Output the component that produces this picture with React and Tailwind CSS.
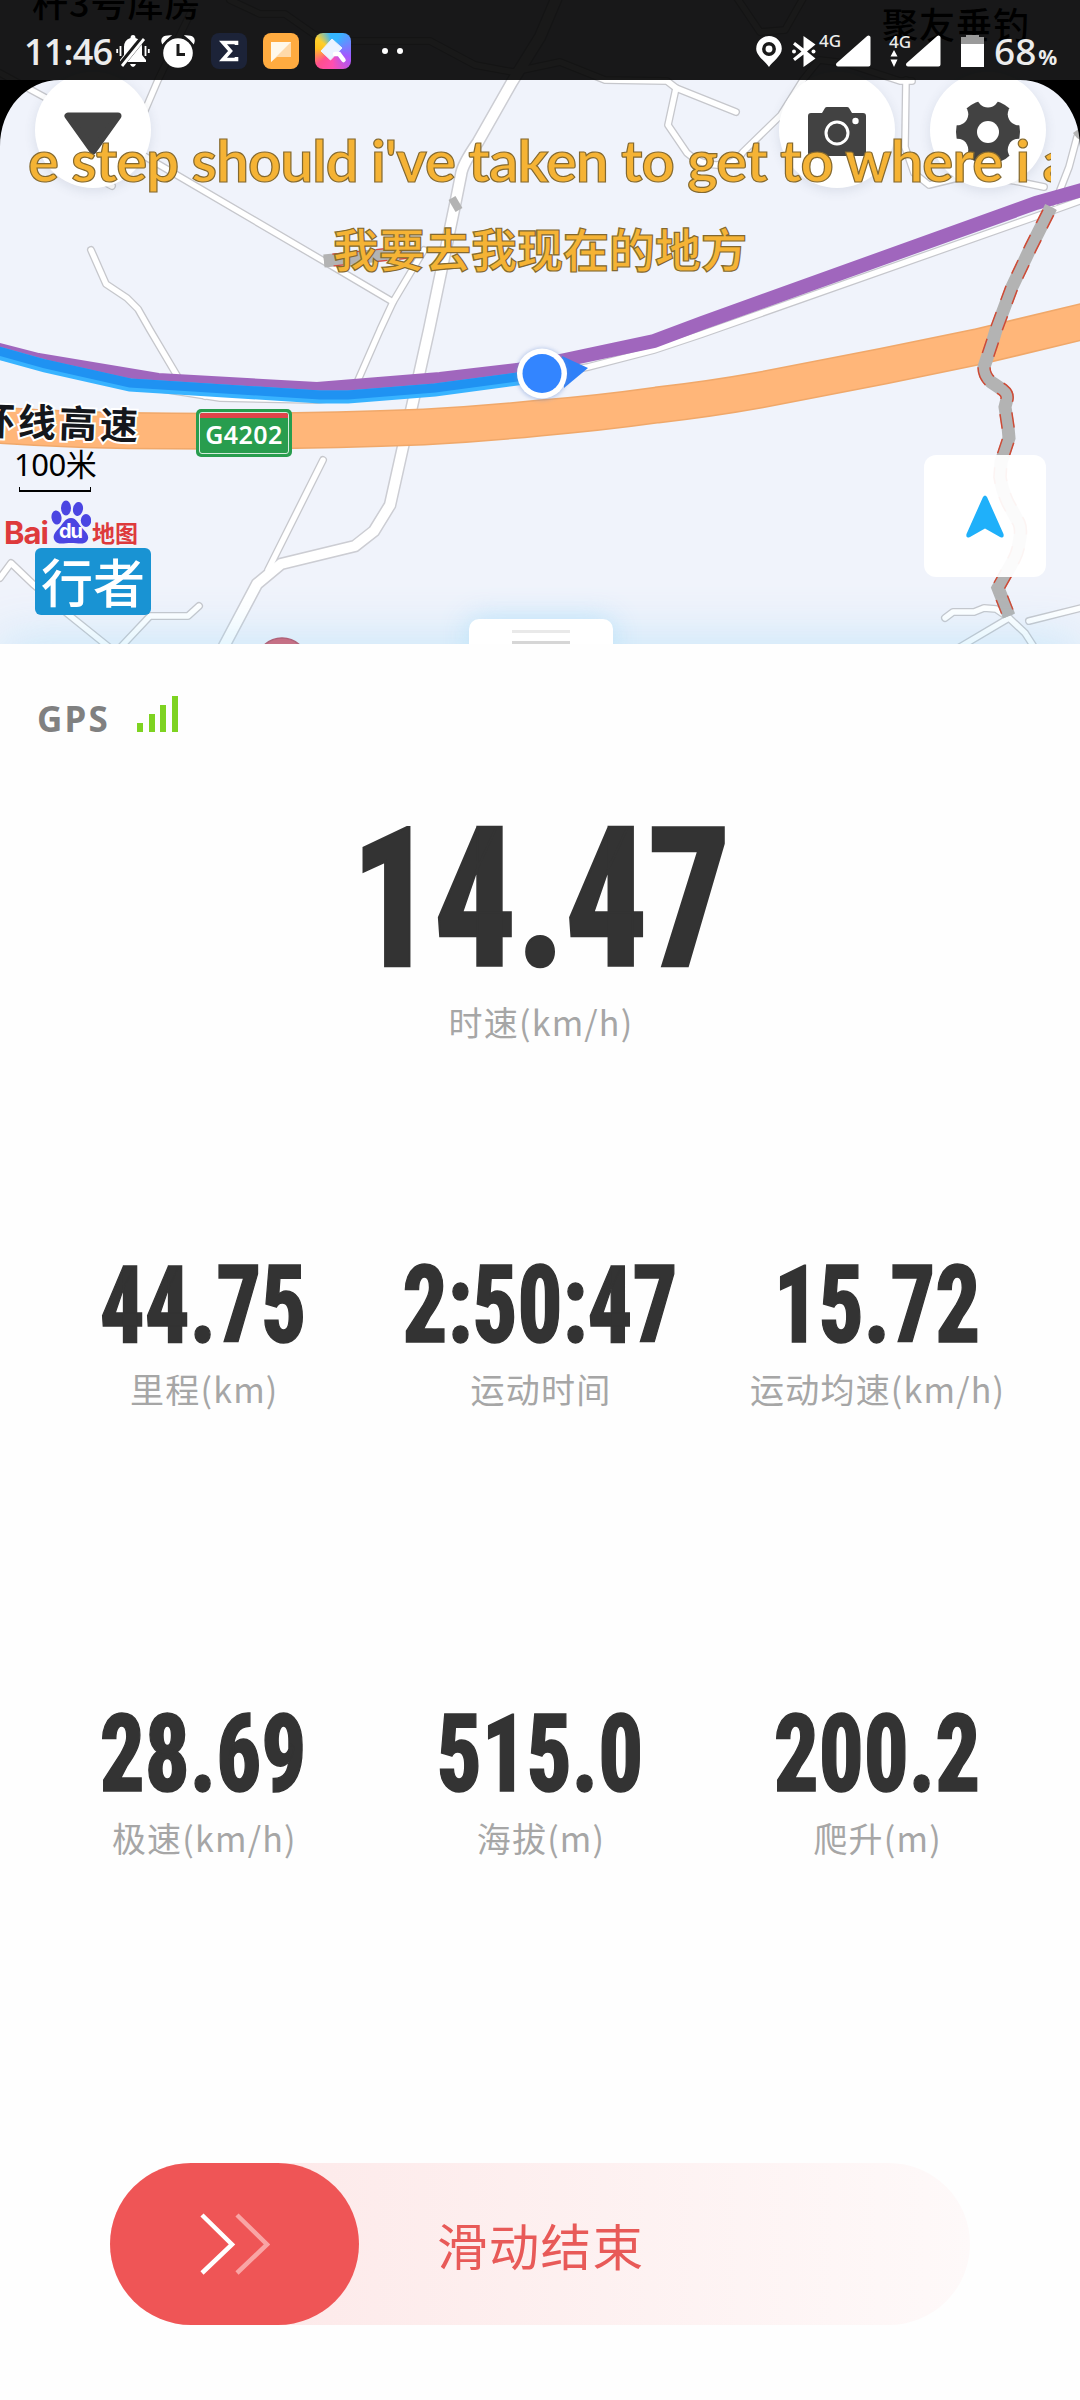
const METRICS = [
  { value: "44.75", label: "里程(km)" },
  { value: "2:50:47", label: "运动时间" },
  { value: "15.72", label: "运动均速(km/h)" },
  { value: "28.69", label: "极速(km/h)" },
  { value: "515.0", label: "海拔(m)" },
  { value: "200.2", label: "爬升(m)" },
];

const MAIN_ROAD = "M560 -10L540 37L512 82L478 142Q462 165 461 175L456 200L429 330L390 505L374 531L355 546L281 564L257 584L222 650";

const MINOR_ROADS = [
  "M0 73L46 98L80 125L146 157L327 263L393 302",
  "M192 10L158 80L143 115",
  "M108 184L112 186",
  "M424 250L393 302L380 330L352 394",
  "M91 250L106 284L127 298L138 309L150 330L182 384L205 396",
  "M323 460L268 570",
  "M0 578L11 563L34 585L69 615L110 648",
  "M118 650L150 616L188 616L199 606",
  "M230 0L260 14L285 14L315 35L345 41L430 41L475 65L513 72L560 62L605 80L667 81L676 88L736 112",
  "M676 88L668 125L687 153Q700 165 717 165Q735 165 743 152L781 115L803 80L819 60L845 63L900 81L912 81",
  "M735 -5L760 32L785 30L805 -5",
  "M906 80L905 147L914 173L929 185L970 175L1015 181L1044 187",
  "M1077 137L1069 167L1055 203",
  "M945 618L953 612L974 612L984 608L996 609L1009 618L1025 633L1036 650",
  "M1009 618L955 650",
  "M1029 621L1085 607",
];

const HIGHWAY = "M-5 425Q80 431 172 431Q293 432 424 427Q480 424 540 418Q600 413 657 405Q710 399 760 390L884 366L977 347L1085 321";
const PLANNED = "M-5 349L38 360L158 380L317 389L440 379L517 370L560 361L654 341L702 323L1036 203L1085 189";
const TRACK = "M-5 352L45 366L130 385L320 397L348 397L435 390L540 376";
const SERVICE = "M0 356L130 384L220 398L317 400L540 376L588 367L654 350L702 334L1043 214L1085 199";
const BRIDGE = "M1051 207L1031 247L1012 287L996 330L993 340L984 367Q984 376 991 382L1003 390Q1008 394 1007 399L1005 407L1008 427L1009 438L1001 462L1000 477Q1002 490 1008 503L1019 523Q1022 530 1019 543Q1018 553 1012 563L998 588L1009 616";

function RoadMap() {
  return (
    <svg className="absolute inset-0" width="1080" height="644" viewBox="0 0 1080 644" fill="none">
      <rect width="1080" height="644" fill="#f0f3fb" />
      {MINOR_ROADS.map((d) => (
        <path key={d} d={d} stroke="#c6c7cc" strokeWidth="8" strokeLinecap="round" strokeLinejoin="round" />
      ))}
      <path d={SERVICE} stroke="#c6c7cc" strokeWidth="8" />
      <path d={MAIN_ROAD} stroke="#cccdd3" strokeWidth="13" />
      {MINOR_ROADS.map((d) => (
        <path key={d} d={d} stroke="#fff" strokeWidth="5.4" strokeLinecap="round" strokeLinejoin="round" />
      ))}
      <path d={SERVICE} stroke="#fff" strokeWidth="5.6" />
      <path d={MAIN_ROAD} stroke="#fff" strokeWidth="10" />
      <path d={HIGHWAY} stroke="#f0a86a" strokeWidth="37" />
      <path d={HIGHWAY} stroke="#ffb679" strokeWidth="34" />
      <path d="M452 198L459 210" stroke="#b3b3b3" strokeWidth="8" />
      <path d="M324 261L420 251" stroke="#b3b3b3" strokeWidth="13" />
      <path d="M324 261L420 251" stroke="#d9453b" strokeWidth="13" strokeDasharray="10 12" strokeDashoffset="-9" />
      <path d="M324 261L420 251" stroke="#b3b3b3" strokeWidth="10.5" />
      <path d={PLANNED} stroke="#a066bd" strokeWidth="14" />
      <path d={TRACK} stroke="#38b3ff" strokeWidth="13" />
      <path d={TRACK} stroke="#1f92f2" strokeWidth="9" transform="translate(0 -2)" />
      <path d={BRIDGE} stroke="#b3b3b3" strokeWidth="13" />
      <path d={BRIDGE} stroke="#cf4a35" strokeWidth="13.5" strokeDasharray="15 13" strokeDashoffset="-6" />
      <path d={BRIDGE} stroke="#b3b3b3" strokeWidth="10.5" />
      <path d="M1080 128L1073 133L1077 138L1080 140Z" fill="#b3b3b3" />
      <circle cx="282" cy="664" r="26" fill="#d5596a" stroke="#b84a5c" strokeWidth="1.5" />
    </svg>
  );
}

function MapLabels() {
  return (
    <>
      <div className="absolute -top-[27px] left-[32px] whitespace-nowrap font-['Noto_Sans_CJK_SC',sans-serif] text-[36px] leading-[56px] font-medium tracking-[1px] text-black">杆3号库房</div>
      <div className="absolute -top-[5px] left-[882px] whitespace-nowrap font-['Noto_Sans_CJK_SC',sans-serif] text-[36px] leading-[56px] font-medium tracking-[1px] text-black">聚友垂钓</div>
      <div className="absolute top-[393px] -left-[23px] rotate-[2deg] whitespace-nowrap font-['Noto_Sans_CJK_SC',sans-serif] text-[38px] leading-[56px] font-bold tracking-[3px] text-[#15171c] [paint-order:stroke] [-webkit-text-stroke:4px_white]">环线高速</div>
      <div className="absolute top-[409px] left-[196px] h-12 w-24 rounded-[5px] bg-[#289d4e] p-[3px]">
        <div className="flex h-full flex-col overflow-hidden rounded-[3px] border border-white/80">
          <div className="h-[5px] bg-[#e2444a]" />
          <div className="text-center font-['Noto_Sans',sans-serif] text-[25px] leading-[32px] font-semibold tracking-[0.4px] text-white">G4202</div>
        </div>
      </div>
      <div className="absolute top-[444px] left-[14px] whitespace-nowrap font-['Noto_Sans','Noto_Sans_CJK_SC',sans-serif] text-[31px] leading-10 tracking-[-0.5px] text-black">100米</div>
      <div className="absolute top-[487px] left-[19px] h-[5px] w-[72px] border-x border-b-2 border-black" />
    </>
  );
}

function BaiduLogo() {
  return (
    <div className="absolute top-[500px] left-[4px] flex h-11 items-end">
      <span className="-mb-[4px] w-[47px] font-['Inter',sans-serif] text-[31px] leading-[30px] font-bold tracking-[-1px] text-[#de3a3c]">Bai</span>
      <div className="relative h-[44px] w-10">
        <svg width="40" height="44" viewBox="0 0 40 44" fill="#4b45e2">
          <ellipse cx="5.500" cy="17.500" rx="5" ry="7" transform="rotate(-8 5.500 17.500)" />
          <ellipse cx="15" cy="8" rx="5" ry="7.500" />
          <ellipse cx="27" cy="9" rx="5" ry="7" transform="rotate(10 27 9)" />
          <ellipse cx="35" cy="20.500" rx="5.200" ry="6.500" />
          <path d="M20 18C14 18 12 24 8 28C3 33 1 37 4 41C7 45 13 43 20 43C27 43 33 45 36 41C39 37 36 33 32 29C27 24 26 18 20 18Z" />
        </svg>
        <span className="absolute top-[21px] left-[8px] font-['Inter',sans-serif] text-[20px] leading-[20px] font-bold tracking-[-1px] text-white">du</span>
      </div>
      <span className="mb-[1px] ml-[1px] font-['Noto_Sans_CJK_SC',sans-serif] text-[23px] leading-[22px] font-bold text-[#de3a3c]">地图</span>
    </div>
  );
}

function RoundButton({ className, children }) {
  return (
    <div className={`absolute top-[72px] flex h-[116px] w-[116px] items-center justify-center rounded-full bg-white shadow-[0_3px_12px_rgba(60,70,100,0.12)] ${className}`}>
      {children}
    </div>
  );
}

function MapSection() {
  return (
    <section className="relative h-[644px] w-full overflow-hidden">
      <RoadMap />
      <MapLabels />
      <BaiduLogo />
      <div className="absolute inset-x-0 -bottom-10 h-10 shadow-[0_0_52px_rgba(130,210,250,0.45)]" />
      <div className="absolute top-[548px] left-[35px] h-[67px] w-[116px] rounded-md bg-[#1993d3] text-center font-['Noto_Sans_CJK_SC',sans-serif] text-[52px] leading-[66px] font-medium text-white">行者</div>

      <svg className="absolute top-[333px] left-[502px]" width="96" height="80" viewBox="502 333 96 80">
        <path d="M562 356L588 368L564 388Z" fill="#2f80f8" />
        <circle cx="542" cy="374" r="26" fill="#6f8fd0" opacity="0.45" filter="blur(2px)" />
        <circle cx="542" cy="373.500" r="25" fill="#fff" />
        <circle cx="542" cy="373.500" r="19.500" fill="#3385ff" />
      </svg>

      <RoundButton className="left-[34.500px]">
        <svg width="60" height="44" viewBox="0 0 60 44" className="mt-[8px]">
          <path d="M5 4H55L30 39Z" fill="#424242" stroke="#424242" strokeWidth="7" strokeLinejoin="round" />
        </svg>
      </RoundButton>
      <RoundButton className="left-[778.500px]">
        <svg width="58" height="49" viewBox="0 0 58 49" className="mt-[2px]">
          <path d="M3 6H14L17 1Q17.500 0 19 0H39Q40.500 0 41 1L44 6H55Q58 6 58 9V46Q58 49 55 49H3Q0 49 0 46V9Q0 6 3 6Z" fill="#424242" />
          <circle cx="29" cy="26" r="11" fill="none" stroke="#fff" strokeWidth="3" />
          <circle cx="47.500" cy="14" r="3.200" fill="#fff" />
        </svg>
      </RoundButton>
      <RoundButton className="left-[929.500px]">
        <svg width="66" height="66" viewBox="-33 -33 66 66" className="mt-[3px]">
          <circle r="32" fill="#424242" />
          {[0, 60, 120, 180, 240, 300].map((a) => (
            <circle key={a} cy="-35.500" r="11" fill="#fff" transform={`rotate(${a})`} />
          ))}
          <circle r="11" fill="#fff" />
        </svg>
      </RoundButton>

      <div className="absolute top-[455px] left-[924px] flex h-[122px] w-[122px] items-center justify-center rounded-[12px] bg-white/94">
        <svg width="38" height="43" viewBox="0 0 38 43">
          <path d="M17 2Q19 -1 21 2L37.500 39Q38.500 44 34 42L19 33.500L4 42Q-0.500 44 0.500 39Z" fill="#1fb0fa" />
        </svg>
      </div>

      <div className="absolute top-[619px] left-[469px] flex h-[30px] w-[144px] flex-col items-center gap-2 rounded-t-[10px] bg-white pt-[11px] shadow-[0_0_28px_rgba(130,210,250,0.45)]">
        <div className="h-[3px] w-[58px] bg-[#e9e9e9]" />
        <div className="h-[3px] w-[58px] bg-[#d6d6d6]" />
      </div>

      <svg className="absolute top-[80px] left-0" width="1080" height="70" viewBox="0 80 1080 70">
        <path d="M0 80H60C27 80 0 108 0 147Z" />
        <path d="M1080 80H1020C1053 80 1080 108 1080 147Z" />
      </svg>
    </section>
  );
}

function Lyrics() {
  return (
    <div className="absolute top-[122px] left-[29px] w-[1022px] overflow-hidden text-[#f5b335] [-webkit-text-stroke:1.2px_#84692f]">
      <div className="-ml-px whitespace-nowrap font-['Lato',sans-serif] text-[58px] leading-[76px] font-bold tracking-[-0.9px]">e step should i've taken to get to where i am</div>
      <div className="mt-[15px] text-center font-['Noto_Sans_CJK_SC',sans-serif] text-[46px] leading-[68px] font-bold">我要去我现在的地方</div>
    </div>
  );
}

function SignalTriangle({ className }) {
  return (
    <svg width="36" height="32" viewBox="0 0 36 32" className={className}>
      <path d="M3 29.500L33.500 2.500V29.500Z" fill="#fff" stroke="#fff" strokeWidth="4" strokeLinejoin="round" />
    </svg>
  );
}

function StatusBar() {
  return (
    <div className="absolute inset-x-0 top-0 flex h-20 items-center bg-black/90 pt-[22px] pl-[24px] font-['Noto_Sans',sans-serif] font-medium text-[#ececec]">
      <div className="w-[92px] pt-[2px] font-['Open_Sans',sans-serif] text-[36px] leading-9 font-semibold tracking-[-0.8px] [font-stretch:88%]">11:46</div>
      <svg width="34" height="32" viewBox="0 0 34 32" fill="#fff">
        <path d="M17 0Q19.500 0 19.500 3Q26 5 26 12V20L30 25V27H4V25L8 20V12Q8 5 14.500 3Q14.500 0 17 0Z" />
        <path d="M14 29H20Q19 32 17 32T14 29Z" />
        <path d="M4.500 11V21M1.200 14V18M29.500 11V21M32.800 14V18" stroke="#fff" strokeWidth="1.800" />
        <path d="M27 3L5 30" stroke="#1a1a1a" strokeWidth="6" />
        <path d="M28 4L6 31" stroke="#fff" strokeWidth="2.800" />
      </svg>
      <svg width="34" height="33" viewBox="0 0 34 33" className="ml-[11px]">
        <circle cx="17" cy="18" r="14.800" fill="#fff" />
        <path d="M1.500 8Q-1 1 9 1Q5 4 1.500 8ZM32.500 8Q35 1 25 1Q29 4 32.500 8Z" fill="#fff" stroke="#fff" strokeWidth="1.500" />
        <path d="M17 9V19.500H24" stroke="#1a1a1a" strokeWidth="3" fill="none" />
      </svg>
      <svg width="36" height="36" viewBox="0 0 36 36" className="ml-[16px]">
        <rect width="36" height="36" rx="8" fill="#1c2338" />
        <path d="M25.500 12V9.500H12L19.500 18L12 26.500H25.500V24" stroke="#fff" strokeWidth="3.600" fill="none" />
      </svg>
      <svg width="36" height="36" viewBox="0 0 36 36" className="ml-[16px]">
        <rect width="36" height="36" rx="8" fill="#ffab40" />
        <path d="M8 9H28V24H14L8 29Z" fill="#ffd9a8" />
        <path d="M8 9H28L8 29Z" fill="#fff8ea" />
      </svg>
      <div className="ml-[16px] h-9 w-9 rounded-lg bg-[conic-gradient(from_20deg,#35b6ff,#a259ff_25%,#ff4fb0_45%,#ff4f8f_58%,#ffc21f_72%,#ffcf2b_80%,#35b6ff_92%)]">
        <svg width="36" height="36" viewBox="0 0 36 36">
          <path d="M17 6L27 15L15.500 27L6 18Z" fill="#eaf3ff" stroke="#eaf3ff" strokeWidth="1" strokeLinejoin="round" />
          <path d="M20 21H24L28.500 27" stroke="#fff" strokeWidth="4.500" fill="none" strokeLinecap="round" />
        </svg>
      </div>
      <div className="ml-[31px] flex gap-[9px]">
        <div className="h-1.5 w-1.5 rounded-full bg-white" />
        <div className="h-1.5 w-1.5 rounded-full bg-white" />
      </div>

      <svg width="26" height="31" viewBox="0 0 26 31" className="ml-[353px]">
        <path d="M13 0A12.800 12.800 0 0 1 25.800 12.800C25.800 20 16 26 13 31C10 26 0.200 20 0.200 12.800A12.800 12.800 0 0 1 13 0Z" fill="#fff" />
        <circle cx="13" cy="13" r="5.200" fill="#fff" stroke="#1a1a1a" strokeWidth="3.500" />
      </svg>
      <svg width="24" height="31" viewBox="0 0 24 31" className="ml-[10px]">
        <path d="M11.500 0L23.500 8.500L15 15.500L23.500 22.500L11.500 31V18.500L3 25L1 22.500L9.500 15.500L1 8.500L3 6L11.500 12.500Z" fill="#fff" />
        <circle cx="2" cy="15.500" r="2" fill="#fff" />
        <circle cx="21.500" cy="15.500" r="2" fill="#fff" />
      </svg>
      <span className="ml-[3px] w-[24px] pb-[20px] text-[17px] leading-4">4G</span>
      <SignalTriangle className="-ml-[8px]" />
      <div className="ml-[18px] flex h-[34px] w-[24px] flex-col">
        <span className="text-[17px] leading-4">4G</span>
        <svg width="10" height="17" viewBox="0 0 10 17" fill="#fff">
          <path d="M5 0L8.500 6.500H1.500ZM5 17L8.500 9.500H1.500Z" />
        </svg>
      </div>
      <SignalTriangle className="-ml-[8px]" />
      <div className="ml-[20px] flex h-8 w-[23px] flex-col items-center">
        <div className="h-[2px] w-[13px] bg-[#9a9a9a]" />
        <div className="h-[7px] w-full bg-[#9a9a9a]" />
        <div className="w-full flex-1 bg-white" />
      </div>
      <div className="ml-[10px] flex items-baseline gap-[2px] pt-[5px] whitespace-nowrap text-[37px] leading-9">
        68<span className="text-[21px] font-bold">%</span>
      </div>
    </div>
  );
}

function Metric({ value, label }) {
  return (
    <div className="flex flex-col items-center">
      <div className="flex h-[102px] w-[290px] scale-x-[0.82] items-center justify-center pt-[1px] font-['Roboto',sans-serif] text-[108px] leading-[100px] font-extrabold whitespace-nowrap text-[#333] [-webkit-text-stroke:1.5px_#333] [font-stretch:75%]">{value}</div>
      <div className="mt-[10px] h-[46px] pl-[2px] font-['Noto_Sans_CJK_SC',sans-serif] text-[34px] leading-[48px] tracking-[1.2px] whitespace-nowrap text-[#a6a6a6]">{label}</div>
    </div>
  );
}

export default function App() {
  return (
    <main className="relative flex h-[2400px] w-[1080px] flex-col overflow-hidden bg-[#fefefe]">
      <MapSection />
      <div className="flex h-[130px] items-end pb-[42px] pl-[37px]">
        <span className="mb-[1px] w-[100px] font-['Noto_Sans',sans-serif] text-[35px] leading-[25px] font-bold tracking-[2.2px] text-[#808080]">GPS</span>
        <div className="flex items-end gap-[5.5px]">
          <div className="h-[9px] w-[6px] bg-[#7ed321]" />
          <div className="h-[18px] w-[6px] bg-[#7ed321]" />
          <div className="h-[27px] w-[6px] bg-[#7ed321]" />
          <div className="h-[36px] w-[6px] bg-[#7ed321]" />
        </div>
      </div>

      <div className="flex h-[479px] flex-col items-center pt-[36px]">
        <div className="h-[180px] scale-x-[0.84] pl-[3px] font-['Roboto',sans-serif] text-[194px] leading-[180px] font-extrabold whitespace-nowrap text-[#333] [-webkit-text-stroke:2.5px_#333] [font-stretch:75%]">14.47</div>
        <div className="mt-[9px] pl-[2px] font-['Noto_Sans_CJK_SC',sans-serif] text-[34px] leading-[46px] tracking-[1.2px] text-[#a6a6a6]">时速(km/h)</div>
      </div>

      <div className="grid grid-cols-3 gap-y-[291px] px-[35px]">
        {METRICS.map((m) => (
          <Metric key={m.label} value={m.value} label={m.label} />
        ))}
      </div>

      <div className="mt-auto mb-[75px] ml-[110px] flex h-[162px] w-[860px] items-center rounded-full bg-gradient-to-r from-[#fdeaea] from-20% to-[#fef9f9]">
        <div className="flex h-full w-[249px] items-center justify-center rounded-full bg-[#ef5556]">
          <svg width="70" height="62" viewBox="0 0 70 62" fill="none" strokeWidth="4.500">
            <path d="M2 2L32 31.500L2 60" stroke="#fff" />
            <path d="M37 2L67 31.500L37 60" stroke="#f9a5a5" />
          </svg>
        </div>
        <span className="ml-[78px] font-['Noto_Sans_CJK_SC',sans-serif] text-[50.5px] leading-[70px] tracking-[1.3px] text-[#e85a58]">滑动结束</span>
      </div>

      <StatusBar />
      <Lyrics />
    </main>
  );
}
